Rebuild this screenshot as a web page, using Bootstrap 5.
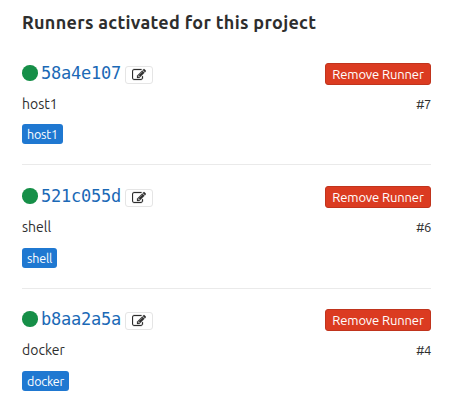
<!DOCTYPE html>
<html lang="en">
<head>
<meta charset="utf-8">
<meta name="viewport" content="width=device-width, initial-scale=1">
<title>Runners</title>
<link href="https://cdn.jsdelivr.net/npm/bootstrap@5.3.0/dist/css/bootstrap.min.css" rel="stylesheet">
<style>
body { font-family: Ubuntu, "Noto Sans", sans-serif; font-size: 14px; color: #2e2e2e; overflow: hidden; }
.runners { width: 409px; margin-left: 22px; padding-top: 11px; }
.runners h4 { font-size: 18px; line-height: 22px; margin-bottom: 9px; font-weight: 700; white-space: nowrap; letter-spacing: .31px; }
.runner { height: 123px; padding-top: 21px; border-bottom: 1px solid #eaeaea; }
.runner:nth-child(2) { height: 124px; }
.runner:nth-child(n+2) .tag { margin-top: 11px; }
.runner:last-child { border-bottom: 0; padding-top: 20px; }
.runner-head { height: 22px; }
.status { width: 15.5px; height: 15.5px; margin: 2px 3.5px 0 0; background: #168f48; flex: none; }
.runner-id { font: 17px/20px "DejaVu Sans Mono", monospace; letter-spacing: -.23px; width: 80px; color: #1b69b6; }
.btn-edit { width: 28px; height: 18px; margin: 3px 0 0 4px; border: 1px solid #e5e5e5; border-radius: 3px; color: #2e2e2e; }
.btn-edit svg { stroke: currentColor; stroke-width: 30; }
.btn-remove { height: 22px; width: 106px; font-size: 13px; letter-spacing: -.12px; line-height: 20px; border-radius: 3px; background: #db3b21; border: 1px solid #c0341d; color: #fff; white-space: nowrap; }
.runner-info { height: 20px; margin-top: 9px; line-height: 20px; }
.runner-num { font-size: 13px; letter-spacing: -.4px; }
.tag { height: 20px; margin-top: 10px; padding: 0 5px; font-size: 12.5px; letter-spacing: -.17px; line-height: 20px; border-radius: 3px; background: #1f78d1; color: #fff; }
</style>
<script src="https://cdn.jsdelivr.net/npm/bootstrap@5.3.0/dist/js/bootstrap.bundle.min.js"></script>
</head>
<body class="bg-white">
<svg class="d-none"><symbol id="edit" viewBox="0 0 1792 1792"><path fill="currentColor" d="M888 1184l116-116-152-152-116 116v56h96v96h56zm440-720q-16-16-33 1l-350 350q-17 17-1 33t33-1l350-350q17-17 1-33zm80 594v190q0 119-84.500 203.500t-203.500 84.500h-832q-119 0-203.500-84.500t-84.500-203.500v-832q0-119 84.500-203.500t203.500-84.500h832q63 0 117 25 15 7 18 23 3 17-9 29l-49 49q-14 14-32 8-23-6-45-6h-832q-66 0-113 47t-47 113v832q0 66 47 113t113 47h832q66 0 113-47t47-113v-126q0-13 9-22l64-64q15-15 35-7t20 29zm-96-738l288 288-672 672h-288v-288zm444 132l-92 92-288-288 92-92q28-28 68-28t68 28l152 152q28 28 28 68t-28 68z"/></symbol></svg>
<main class="runners">
  <h4>Runners activated for this project</h4>
  <ul class="list-unstyled mb-0">
    <li class="runner">
      <div class="runner-head d-flex align-items-start">
        <span class="status rounded-circle"></span><a href="#" class="runner-id text-decoration-none">58a4e107</a>
        <a href="#" class="btn btn-edit p-0 d-flex align-items-center justify-content-center" aria-label="Edit"><svg width="14" height="14"><use href="#edit"/></svg></a>
        <button class="btn btn-remove p-0 ms-auto">Remove Runner</button>
      </div>
      <div class="runner-info d-flex justify-content-between"><span>host1</span><span class="runner-num">#7</span></div>
      <div class="d-flex"><span class="tag">host1</span></div>
    </li>
    <li class="runner">
      <div class="runner-head d-flex align-items-start">
        <span class="status rounded-circle"></span><a href="#" class="runner-id text-decoration-none">521c055d</a>
        <a href="#" class="btn btn-edit p-0 d-flex align-items-center justify-content-center" aria-label="Edit"><svg width="14" height="14"><use href="#edit"/></svg></a>
        <button class="btn btn-remove p-0 ms-auto">Remove Runner</button>
      </div>
      <div class="runner-info d-flex justify-content-between"><span>shell</span><span class="runner-num">#6</span></div>
      <div class="d-flex"><span class="tag">shell</span></div>
    </li>
    <li class="runner">
      <div class="runner-head d-flex align-items-start">
        <span class="status rounded-circle"></span><a href="#" class="runner-id text-decoration-none">b8aa2a5a</a>
        <a href="#" class="btn btn-edit p-0 d-flex align-items-center justify-content-center" aria-label="Edit"><svg width="14" height="14"><use href="#edit"/></svg></a>
        <button class="btn btn-remove p-0 ms-auto">Remove Runner</button>
      </div>
      <div class="runner-info d-flex justify-content-between"><span>docker</span><span class="runner-num">#4</span></div>
      <div class="d-flex"><span class="tag">docker</span></div>
    </li>
  </ul>
</main>
</body>
</html>
